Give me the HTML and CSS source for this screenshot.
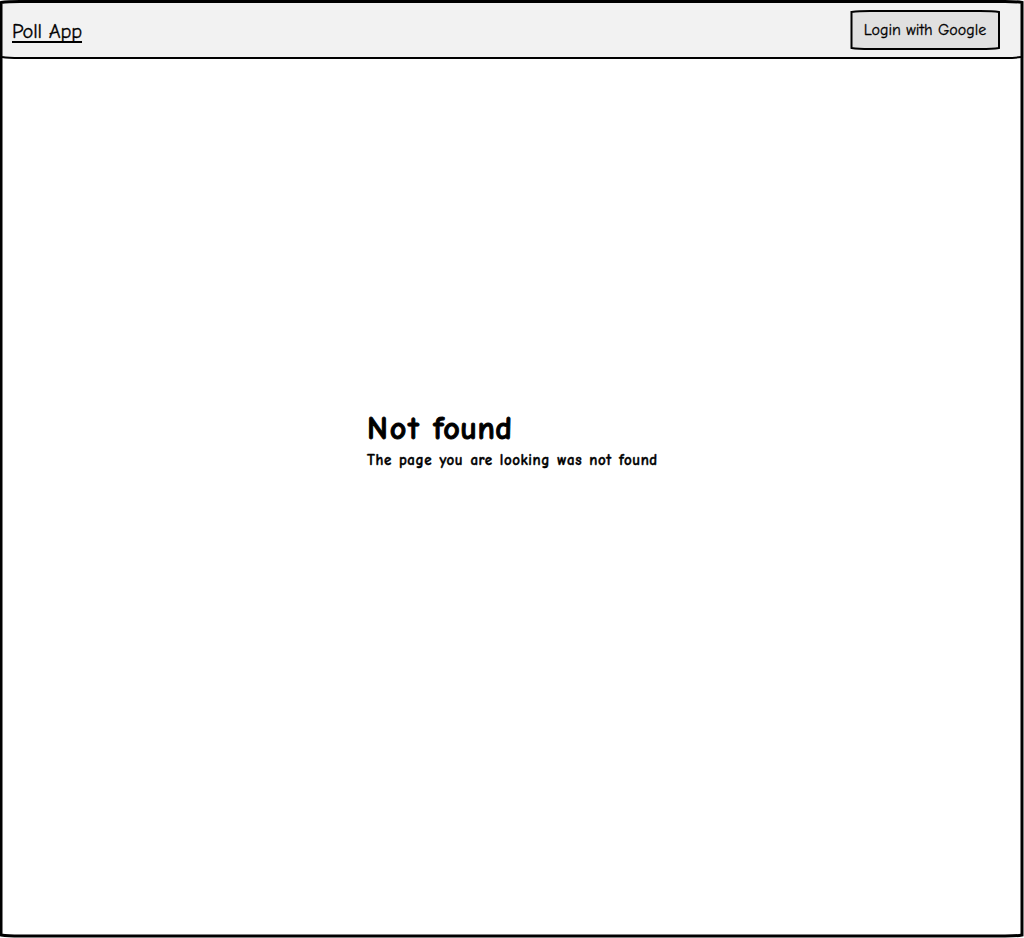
FILE: index.html
```html
<!DOCTYPE html>
<html lang="en">
<head>
<meta charset="utf-8">
<title>Poll App</title>
<link rel="stylesheet" href="styles.css">
</head>
<body>
<div class="page">
  <header class="navbar">
    <a class="brand">Poll App</a>
    <button class="login" type="button">
      <svg class="login-outline" viewBox="0 0 150 40" aria-hidden="true">
        <path d="M1.5 2 Q9 1 20 1 H130 Q143 1 149 2 V38 Q143 39 130 39 H20 Q8 39 1.5 38Z"/>
      </svg>
      <span class="login-label">Login with Google</span>
    </button>
  </header>
  <main class="content">
    <div class="message">
      <h1 class="title"><span class="title-lead">Not</span> found</h1>
      <p class="subtitle">The page you are looking was not found</p>
    </div>
  </main>
  <svg class="frame" viewBox="0 0 1024 938" aria-hidden="true">
    <path class="frame-outer" d="M1 2.5 Q8 1.5 20 1.5 H1005 Q1017 1.5 1022 2.5 V935 Q1017 936 1005 936 H20 Q8 936 1 935Z"/>
    <path class="frame-rule" d="M2 57 Q8 58 20 58 H1005 Q1015 58 1021 57"/>
  </svg>
</div>
</body>
</html>
```
FILE: styles.css
```css
* { box-sizing: border-box; }
body {
  margin: 0;
  background: #fff;
  color: #000;
  font-family: "Comic Neue", "Comic Sans MS", Lato, sans-serif;
}
.page {
  position: relative;
  display: flex;
  flex-direction: column;
  height: 938px;
  overflow: hidden;
}
.navbar {
  display: flex;
  align-items: center;
  justify-content: space-between;
  height: 58px;
  padding: 2px 24px 0 12px;
  background: #f2f2f2;
}
.brand {
  font-size: 20.5px;
  line-height: 24px;
  padding-top: 4px;
  letter-spacing: -0.12px;
  -webkit-text-stroke: 0.3px #000;
  text-decoration: underline;
  text-decoration-thickness: 1.5px;
  text-underline-offset: 3px;
  text-decoration-skip-ink: none;
}
.login {
  position: relative;
  width: 150px;
  height: 40px;
  padding: 0;
  border: 0;
  background: none;
  color: #000;
  font: 16px/20px "Comic Neue", "Comic Sans MS", Lato, sans-serif;
  -webkit-text-stroke: 0.3px #000;
  white-space: nowrap;
}
.login-outline {
  position: absolute;
  inset: 0;
  width: 150px;
  height: 40px;
  fill: #e0e0e0;
  stroke: #000;
  stroke-width: 2;
}
.login-label { position: relative; }
.content {
  display: flex;
  flex: 1;
  justify-content: center;
  padding-top: 351px;
}
.message { width: 290px; white-space: nowrap; }
.title {
  margin: 0;
  font-size: 32px;
  line-height: 40px;
  font-weight: 700;
  letter-spacing: 0.5px;
  word-spacing: 0.5px;
  -webkit-text-stroke: 0.9px #000;
}
.title-lead { letter-spacing: 2px; }
.subtitle {
  margin: 0;
  font-size: 15px;
  line-height: 22px;
  font-weight: 700;
  letter-spacing: 0.55px;
  word-spacing: 1.3px;
  -webkit-text-stroke: 0.4px #000;
}
.frame {
  position: absolute;
  inset: 0;
  width: 1024px;
  height: 938px;
  fill: none;
  stroke: #000;
  pointer-events: none;
}
.frame-outer { stroke-width: 3; }
.frame-rule { stroke-width: 2; }
```
